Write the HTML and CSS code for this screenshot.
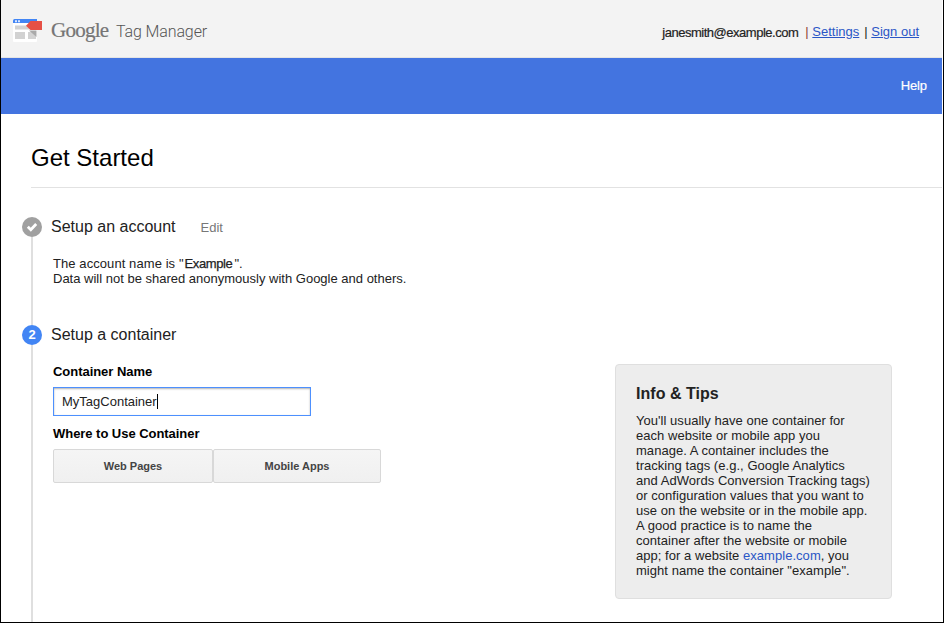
FILE: index.html
```html
<!DOCTYPE html>
<html lang="en">
<head>
<meta charset="utf-8">
<title>Google Tag Manager</title>
<link rel="stylesheet" href="styles.css">
</head>
<body>
<div class="frame">
  <header class="topbar">
    <svg class="logo" width="30" height="24" viewBox="0 0 30 24" aria-hidden="true">
      <rect x="0" y="0" width="24" height="23" rx="1" fill="#fff"/>
      <path d="M0 4V1.500Q0 0 1.500 0H24V4Z" fill="#4285f4"/>
      <path d="M2 1.300h2v2H2zM5 1.300h2v2H5z" fill="#dbe8ff"/>
      <path d="M2 6.500h20v4H2zM2 13h10v7H2zM15 13h8v7h-8z" fill="#d2d2d2"/>
      <path d="M16 11.500h7.500V18Z" fill="#a9a9a9"/>
      <path d="M13 6.700 17.500 2H29V11H17.500Z" fill="#e65045"/>
    </svg>
    <span class="brand">Google</span>
    <span class="product">Tag Manager</span>
    <nav class="user">
      <span class="email">janesmith@example.com</span>
      <span class="sep sep-red">|</span>
      <a href="#" class="settings">Settings</a>
      <span class="sep">|</span>
      <a href="#" class="signout">Sign out</a>
    </nav>
  </header>
  <div class="bluebar"><a href="#" class="help">Help</a></div>
  <main>
    <h1><span>Get Started</span></h1>
    <section class="step step-account">
      <div class="rail">
        <svg width="20" height="20" viewBox="0 0 20 20" aria-hidden="true"><circle cx="10" cy="10" r="10" fill="#a0a0a0"/><path d="M5.800 9.800 8.800 12.700 14.200 7" fill="none" stroke="#fff" stroke-width="2.800"/></svg>
      </div>
      <div class="content">
        <div class="heading"><h2>Setup an account</h2><a href="#" class="edit">Edit</a></div>
        <p class="summary"><span class="lead">The account name is "</span><span class="name">Example</span>".<br>Data will not be shared anonymously with Google and others.</p>
      </div>
    </section>
    <section class="step step-container">
      <div class="rail"><span class="num">2</span></div>
      <div class="content">
        <div class="heading"><h2>Setup a container</h2></div>
        <div class="columns">
          <div class="form">
            <div class="label">Container Name</div>
            <div class="field"><span>MyTagContainer</span><i class="caret"></i></div>
            <div class="label">Where to Use Container</div>
            <div class="buttons"><button class="web">Web Pages</button><button class="mobile">Mobile Apps</button></div>
          </div>
          <aside class="tips">
            <h3>Info &amp; Tips</h3>
            <p>You'll usually have one container for<br>each website or mobile app you<br>manage. A container includes the<br>tracking tags (e.g., Google Analytics<br>and AdWords Conversion Tracking tags)<br>or configuration values that you want to<br>use on the website or in the mobile app.<br>A good practice is to name the<br>container after the website or mobile<br>app; for a website <a href="#">example.com</a>, you<br>might name the container "example".</p>
          </aside>
        </div>
      </div>
    </section>
  </main>
</div>
</body>
</html>
```
FILE: styles.css
```css
* { box-sizing: border-box; }
body { margin: 0; background: #fff; font: 13px/15px "Liberation Sans", Arial, sans-serif; color: #222; overflow: hidden; white-space: nowrap; }
h1, h2, h3, p { margin: 0; font-weight: normal; }
.frame { display: flex; flex-direction: column; width: 944px; height: 623px; border: solid #000; border-width: 0 1px 1px 1px; padding-right: 1px; overflow: hidden; }
.topbar { display: flex; align-items: flex-start; flex: none; height: 58px; background: #f3f3f3; border-bottom: 1px solid #e4e4e4; padding-left: 12px; }
.logo { margin-top: 19px; flex: none; }
.brand { margin: 18px 0 0 8px; width: 65px; font: 21px/25px "Liberation Serif", serif; color: #757575; letter-spacing: -0.75px; -webkit-text-stroke: .2px #757575; }
.product { margin-top: 22px; font: 300 16px/20px Roboto, sans-serif; color: #555; letter-spacing: -0.12px; }
.user { display: flex; margin: 24px 23px 0 auto; }
.email { letter-spacing: -0.48px; color: #222; margin: 1px 7px 0 0; -webkit-text-stroke: .2px #222; }
.sep { width: 7px; }
.sep-red { color: #8f3a36; }
.user a { color: #2a56c6; text-decoration: underline; }
.settings { margin-right: 5px; }
.bluebar { flex: none; display: flex; justify-content: flex-end; height: 56px; background: #4374e0; padding: 20px 15px 0 0; }
.help { color: #fff; text-decoration: none; letter-spacing: -.1px; -webkit-text-stroke: .2px #fff; }
main { flex: 1; display: flex; flex-direction: column; padding-left: 21px; min-height: 0; }
h1 { flex: none; height: 74px; margin-left: 9px; padding-top: 30px; font-size: 24px; line-height: 28px; color: #000; border-bottom: 1px solid #e2e2e2; }
.step { display: flex; flex: none; }
.step-account { height: 108px; margin-top: 29px; }
.step-container { flex: 1; }
.rail { width: 20px; flex: none; display: flex; flex-direction: column; align-items: center; }
.rail::after { content: ""; width: 2px; flex: 1; background: #dfdfdf; }
.num { width: 20px; height: 20px; border-radius: 50%; background: #4285f4; color: #fff; font-weight: bold; line-height: 20px; text-align: center; }
.content { padding-left: 11px; }
.heading { display: flex; align-items: baseline; height: 20px; margin-left: -2px; }
h2 { font-size: 16px; line-height: 19px; }
.edit { margin-left: 25px; color: #777; text-decoration: none; }
.summary { margin-top: 19px; }
.lead { letter-spacing: .08px; }
.name { letter-spacing: -.4px; margin: 0 2px 0 1px; -webkit-text-stroke: .25px #222; }
.columns { display: flex; }
.form { width: 562px; padding-top: 19px; }
.label { font-weight: bold; color: #000; letter-spacing: -.04px; }
.field { display: flex; align-items: center; width: 258px; height: 29px; margin: 8px 0 10px; border: 1px solid #4d90fe; box-shadow: inset 0 1px 2px rgba(0,0,0,.3); padding-left: 8px; }
.caret { width: 1px; height: 15px; background: #000; }
.buttons { display: flex; margin-top: 8px; }
button { height: 34px; border: 1px solid #d8d8d8; border-radius: 2px; background: linear-gradient(#f5f5f5, #f0f0f0); font: bold 11px "Liberation Sans", sans-serif; color: #444; padding: 0; }
.web { width: 160px; }
.mobile { width: 168px; }
.tips { width: 277px; height: 235px; margin-top: 19px; border: 1px solid #dfdfdf; border-radius: 4px; background: #ededed; padding: 19px 20px; letter-spacing: .04px; }
.tips h3 { font: bold 16px/19px "Liberation Sans", sans-serif; margin-bottom: 10px; }
.tips a { color: #2a56c6; text-decoration: none; }
```
